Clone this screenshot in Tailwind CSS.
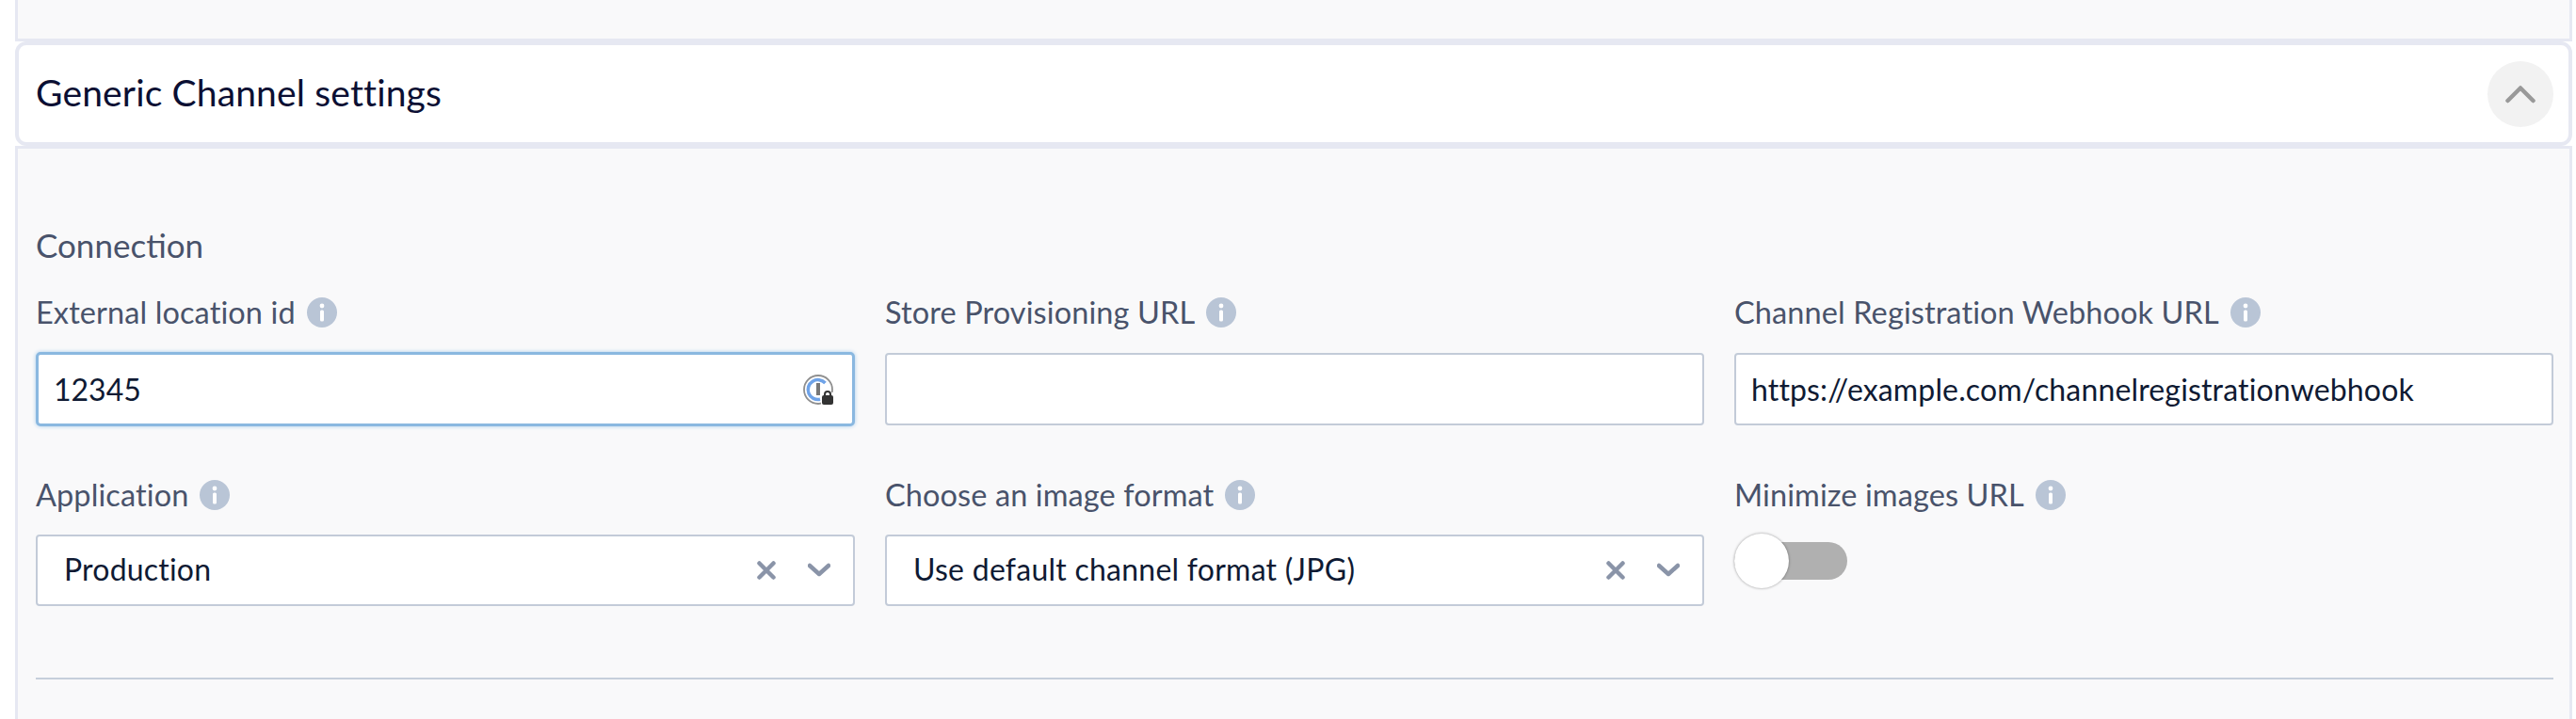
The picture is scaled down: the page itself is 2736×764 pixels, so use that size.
<!DOCTYPE html>
<html lang="en">
<head>
  <meta charset="UTF-8" />
  <title>Generic Channel settings</title>
  <script src="https://cdn.jsdelivr.net/npm/@tailwindcss/browser@4"></script>
</head>
<body class="bg-white h-[764px] overflow-hidden font-['Lato','Liberation_Sans',sans-serif]">
  <div class="mx-4 w-[2716px]">
    <!-- previous section, cut off by the top of the page -->
    <div class="h-[44px] bg-[#f9f9fa] border-x-[3px] border-b-[3px] border-[#e6e8f2]"></div>

    <!-- Header -->
    <div class="h-[111px] bg-white border-4 border-[#e6e8f2] rounded-xl flex items-center justify-between pl-[18px] pr-4">
      <h2 class="text-[39px] tracking-[0.15px] text-[#0b0f33] -mt-[2px]">Generic Channel settings</h2>
      <button class="w-[70px] h-[70px] rounded-full bg-[#f2f2f2] flex items-center justify-center">
        <svg width="32" height="20" viewBox="0 0 32 20" fill="none" stroke="#999999" stroke-width="4.5" stroke-linecap="round" stroke-linejoin="round"><path d="M2.5 17 16 3.5 29.5 17" /></svg>
      </button>
    </div>

    <!-- Body -->
    <div class="h-[609px] bg-[#f9f9fa] border-x-[3px] border-t-[3px] border-[#e6e8f2] pl-[19px] pr-[17px] pt-[80px]">
      <h3 class="text-[35px] leading-[44px] text-[#49536b]">Connection</h3>

      <div class="grid grid-cols-3 gap-x-[32px] mt-[26px]">
        <div>
          <label class="flex items-center gap-3 h-[48px] text-[32.5px] tracking-[0.1px] text-[#49536b]">External location id
            <svg class="w-8 h-8" viewBox="0 0 32 32"><circle cx="16" cy="16" r="16" fill="#b9c5d6" /><circle cx="16" cy="9" r="2.4" fill="#fff" /><rect x="14" y="13.5" width="4" height="12" rx="1.5" fill="#fff" /></svg>
          </label>
          <div class="relative mt-[18px]">
            <input value="12345" class="w-full h-[79px] bg-white border-[3px] border-[#8ab8e0] rounded-[5px] pl-4 text-[32px] text-[#0f1a33] shadow-[0_0_4px_#a9cdec]" />
            <svg class="absolute right-[23px] top-[24px] w-8 h-8" viewBox="0 0 32 32" fill="none">
              <circle cx="16" cy="16" r="15" stroke="#8f8f8f" stroke-width="1.8" />
              <path d="M23.5 9A10.5 10.5 0 1 0 18 26.3" stroke="#6fa3e8" stroke-width="3.5" />
              <rect x="14" y="9" width="4" height="13" fill="#777" />
              <rect x="19" y="19" width="13" height="13" fill="#fff" />
              <path d="M23 23v-2a3 3 0 0 1 6 0v2" stroke="#333" stroke-width="2" />
              <rect x="20" y="22" width="12" height="10" rx="2" fill="#333" />
            </svg>
          </div>
        </div>
        <div>
          <label class="flex items-center gap-3 h-[48px] text-[32.5px] tracking-[0.1px] text-[#49536b]">Store Provisioning URL
            <svg class="w-8 h-8" viewBox="0 0 32 32"><circle cx="16" cy="16" r="16" fill="#b9c5d6" /><circle cx="16" cy="9" r="2.4" fill="#fff" /><rect x="14" y="13.5" width="4" height="12" rx="1.5" fill="#fff" /></svg>
          </label>
          <input class="block w-full h-[77px] mt-[19px] bg-white border-2 border-[#c3cbd8] rounded-[4px] pl-4 text-[32px] text-[#0f1a33]" />
        </div>
        <div>
          <label class="flex items-center gap-3 h-[48px] text-[32.5px] tracking-[0.1px] text-[#49536b]">Channel Registration Webhook URL
            <svg class="w-8 h-8" viewBox="0 0 32 32"><circle cx="16" cy="16" r="16" fill="#b9c5d6" /><circle cx="16" cy="9" r="2.4" fill="#fff" /><rect x="14" y="13.5" width="4" height="12" rx="1.5" fill="#fff" /></svg>
          </label>
          <input value="https://example.com/channelregistrationwebhook" class="block w-full h-[77px] mt-[19px] bg-white border-2 border-[#c3cbd8] rounded-[4px] pl-4 text-[32px] tracking-[0.15px] text-[#0f1a33]" />
        </div>
      </div>

      <div class="grid grid-cols-3 gap-x-[32px] mt-[49px]">
        <div>
          <label class="flex items-center gap-3 h-[48px] text-[32.5px] tracking-[0.1px] text-[#49536b]">Application
            <svg class="w-8 h-8" viewBox="0 0 32 32"><circle cx="16" cy="16" r="16" fill="#b9c5d6" /><circle cx="16" cy="9" r="2.4" fill="#fff" /><rect x="14" y="13.5" width="4" height="12" rx="1.5" fill="#fff" /></svg>
          </label>
          <div class="flex items-center h-[76px] mt-[18px] bg-white border-2 border-[#c3cbd8] rounded-[4px] pl-7 pr-[24px]">
            <span class="flex-1 -mt-[2px] text-[32px] tracking-[0.2px] text-[#0f1a33]">Production</span>
            <svg class="w-5 h-5" viewBox="0 0 20 20" stroke="#8a94a8" stroke-width="4.5" stroke-linecap="round"><path d="M2.5 2.5l15 15M17.5 2.5l-15 15" /></svg>
            <svg class="w-[24px] h-[16px] ml-[34px]" viewBox="0 0 24 16" fill="none" stroke="#8a94a8" stroke-width="4.5" stroke-linecap="round" stroke-linejoin="round"><path d="M2 3l10 9 10-9" /></svg>
          </div>
        </div>
        <div>
          <label class="flex items-center gap-3 h-[48px] text-[32.5px] tracking-[0.1px] text-[#49536b]">Choose an image format
            <svg class="w-8 h-8" viewBox="0 0 32 32"><circle cx="16" cy="16" r="16" fill="#b9c5d6" /><circle cx="16" cy="9" r="2.4" fill="#fff" /><rect x="14" y="13.5" width="4" height="12" rx="1.5" fill="#fff" /></svg>
          </label>
          <div class="flex items-center h-[76px] mt-[18px] bg-white border-2 border-[#c3cbd8] rounded-[4px] pl-7 pr-[24px]">
            <span class="flex-1 -mt-[2px] text-[32px] tracking-[0.25px] text-[#0f1a33]">Use default channel format (JPG)</span>
            <svg class="w-5 h-5" viewBox="0 0 20 20" stroke="#8a94a8" stroke-width="4.5" stroke-linecap="round"><path d="M2.5 2.5l15 15M17.5 2.5l-15 15" /></svg>
            <svg class="w-[24px] h-[16px] ml-[34px]" viewBox="0 0 24 16" fill="none" stroke="#8a94a8" stroke-width="4.5" stroke-linecap="round" stroke-linejoin="round"><path d="M2 3l10 9 10-9" /></svg>
          </div>
        </div>
        <div>
          <label class="flex items-center gap-3 h-[48px] text-[32.5px] tracking-[0.1px] text-[#49536b]">Minimize images URL
            <svg class="w-8 h-8" viewBox="0 0 32 32"><circle cx="16" cy="16" r="16" fill="#b9c5d6" /><circle cx="16" cy="9" r="2.4" fill="#fff" /><rect x="14" y="13.5" width="4" height="12" rx="1.5" fill="#fff" /></svg>
          </label>
          <div class="relative w-[120px] h-10 mt-[26px] bg-[#b0b0b0] rounded-full">
            <span class="absolute left-0 top-[-9px] w-[58px] h-[58px] bg-white rounded-full shadow-[0_0_3px_rgba(0,0,0,0.4)]"></span>
          </div>
        </div>
      </div>

      <hr class="mt-[76px] border-t-2 border-[#c6cfdb]" />
    </div>
  </div>
</body>
</html>
